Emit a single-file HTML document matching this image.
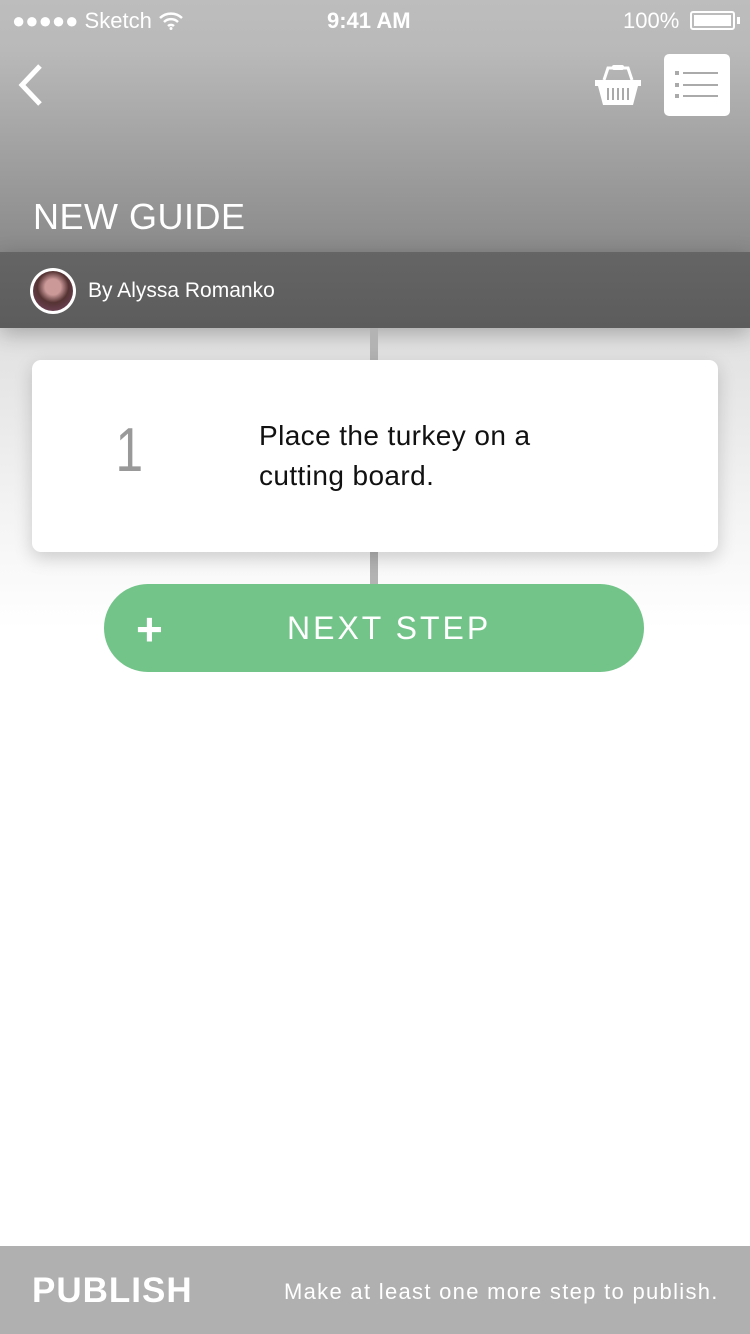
<!DOCTYPE html>
<html><head><meta charset="utf-8"><style>
*{margin:0;padding:0;box-sizing:border-box}
body{width:750px;height:1334px;overflow:hidden;position:relative;background:#fff;font-family:"Liberation Sans",sans-serif}
.hdr{position:absolute;left:0;top:0;width:750px;height:252px;background:linear-gradient(#bdbdbd 0%,#b9b9b9 20%,#a7a7a7 50%,#8a8a8a 100%)}
.by{position:absolute;left:0;top:252px;width:750px;height:76px;background:linear-gradient(#656565,#5c5c5c);box-shadow:0 6px 20px rgba(0,0,0,.25)}
.fade{position:absolute;left:0;top:328px;width:750px;height:300px;background:linear-gradient(#e0e0e0,#f3f3f3 60%,#fff)}
.sb{position:absolute;top:8px;color:#fff;font-size:22px}
.line{position:absolute;left:370px;width:8px;background:#b3b3b3}
.card{position:absolute;left:32px;top:360px;width:686px;height:192px;background:#fff;border-radius:9px;box-shadow:0 6px 18px rgba(0,0,0,.18)}
.btn{position:absolute;left:104px;top:584px;width:540px;height:88px;border-radius:44px;background:#72c489;color:#fff}
.pub{position:absolute;left:0;top:1246px;width:750px;height:88px;background:#b0b0b0;color:#fff}
</style></head><body>
<div class="hdr"></div>
<div class="fade"></div>
<div class="by"></div>
<div class="sb" style="left:12px">●●●●● Sketch <svg width="26" height="18" viewBox="0 0 26 18" style="vertical-align:-2px"><path d="M2 6a16 16 0 0 1 22 0M6 10a10 10 0 0 1 14 0M10 14a4.5 4.5 0 0 1 6 0" stroke="#fff" stroke-width="2.5" fill="none"/><circle cx="13" cy="16.5" r="1.5" fill="#fff"/></svg></div>
<div class="sb" style="left:327px;font-weight:bold">9:41 AM</div>
<div class="sb" style="left:623px">100%</div>
<div style="position:absolute;left:690px;top:11px;width:45px;height:19px;border:2px solid #fff;border-radius:3px;padding:2px"><div style="background:#fff;width:100%;height:100%"></div></div>
<div style="position:absolute;left:737px;top:17px;width:3px;height:7px;background:#fff"></div>
<svg style="position:absolute;left:14px;top:62px" width="30" height="46"><path d="M26 4 L8 23 L26 42" stroke="#fff" stroke-width="5" fill="none"/></svg>
<svg style="position:absolute;left:592px;top:62px" width="52" height="46" viewBox="0 0 52 46"><path d="M12 18 L16 6 H36 L40 18" stroke="#fff" stroke-width="3" fill="none"/><rect x="20" y="3" width="12" height="5" rx="2" fill="#fff"/><path d="M3 18 H49 V24 H46 L41 43 H11 L6 24 H3 Z" fill="#fff"/><path d="M16 26v12M21 26v12M26 26v12M31 26v12M36 26v12" stroke="#aaa" stroke-width="2"/></svg>
<div style="position:absolute;left:664px;top:54px;width:66px;height:62px;background:#fff;border-radius:5px"></div>
<svg style="position:absolute;left:664px;top:54px" width="66" height="62"><g fill="#aaa"><rect x="11" y="17" width="4" height="4"/><rect x="11" y="29" width="4" height="4"/><rect x="11" y="40" width="4" height="4"/><rect x="19" y="18" width="35" height="2"/><rect x="19" y="30" width="35" height="2"/><rect x="19" y="41" width="35" height="2"/></g></svg>
<div style="position:absolute;left:33px;top:196px;color:#fff;font-size:36px;letter-spacing:.5px">NEW GUIDE</div>
<div style="position:absolute;left:30px;top:268px;width:46px;height:46px;border-radius:50%;background:#fff;padding:3px"><div style="width:100%;height:100%;border-radius:50%;background:radial-gradient(circle at 50% 40%,#c99 0 25%,#533 50%,#7a4a6a)"></div></div>
<div style="position:absolute;left:88px;top:279px;color:#fff;font-size:21px">By Alyssa Romanko</div>
<div class="line" style="top:328px;height:32px"></div>
<div class="line" style="top:552px;height:32px"></div>
<div class="card">
<div style="position:absolute;left:80px;top:55px;font-size:62px;color:#999;font-weight:300;transform:scaleX(.8)">1</div>
<div style="position:absolute;left:227px;top:56px;font-size:28px;line-height:40px;color:#111;letter-spacing:.4px">Place the turkey on a<br>cutting board.</div>
</div>
<div class="btn">
<div style="position:absolute;left:32px;top:18px;font-size:46px;font-weight:bold">+</div>
<div style="position:absolute;left:183px;top:26px;font-size:32px;letter-spacing:3px">NEXT STEP</div>
</div>
<div class="pub">
<div style="position:absolute;left:32px;top:25px;font-size:35px;font-weight:bold;letter-spacing:1px">PUBLISH</div>
<div style="position:absolute;left:284px;top:33px;font-size:22px;letter-spacing:1.3px">Make at least one more step to publish.</div>
</div>
</body></html>
